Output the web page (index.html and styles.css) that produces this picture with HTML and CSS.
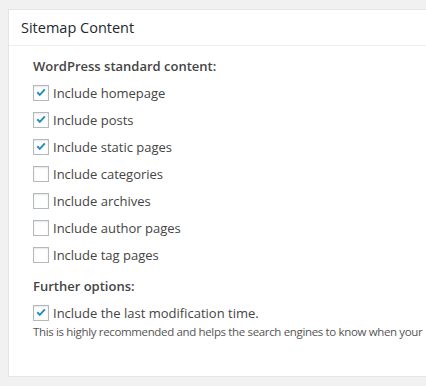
FILE: index.html
```html
<!DOCTYPE html>
<html>
<head>
  <meta charset="UTF-8" />
  <title>Sitemap Content</title>
  <link rel="stylesheet" href="styles.css">
</head>
<body>

  <div class="postbox">
    <h2 class="hndle">Sitemap Content</h2>
    <div class="inside">
      <h4>WordPress standard content:</h4>
      <ul class="opts">
        <li><span class="box"><svg viewBox="0 0 16 16"><path d="M3 7.9l1.6-1.5 2 2.2 5-5.4 1.6 1.5-6.6 7z"/></svg></span>Include homepage</li>
        <li><span class="box"><svg viewBox="0 0 16 16"><path d="M3 7.9l1.6-1.5 2 2.2 5-5.4 1.6 1.5-6.6 7z"/></svg></span>Include posts</li>
        <li><span class="box"><svg viewBox="0 0 16 16"><path d="M3 7.9l1.6-1.5 2 2.2 5-5.4 1.6 1.5-6.6 7z"/></svg></span>Include static pages</li>
        <li><span class="box"></span>Include categories</li>
        <li><span class="box"></span>Include archives</li>
        <li><span class="box"></span>Include author pages</li>
        <li><span class="box"></span>Include tag pages</li>
      </ul>

      <h4 class="further">Further options:</h4>
      <ul class="opts">
        <li><span class="box"><svg viewBox="0 0 16 16"><path d="M3 7.9l1.6-1.5 2 2.2 5-5.4 1.6 1.5-6.6 7z"/></svg></span>Include the last modification time.</li>
      </ul>
      <p class="desc">This is highly recommended and helps the search engines to know when your</p>
    </div>
  </div>

</body>
</html>
```

FILE: styles.css
```css
html, body {
  overflow: hidden;
}

body {
  margin: 0;
  padding: 9px 0 0 8px;
  background: #f1f1f1;
  font-family: "Open Sans", sans-serif;
  font-size: 13px;
  color: #444;
}

.postbox {
  width: 640px;
  background: #fff;
  border: 1px solid #e5e5e5;
  box-shadow: 0 1px 1px rgba(0, 0, 0, 0.04);
}

.hndle {
  margin: 0;
  padding: 8px 12px;
  font-size: 14.5px;
  font-weight: 400;
  line-height: 19px;
  color: #23282d;
  border-bottom: 1px solid #eee;
}

.inside {
  padding: 11px 24px 36px 24px;
}

.inside h4 {
  margin: 0 0 4px 0;
  font-size: 13px;
  font-weight: 600;
  line-height: 18px;
  color: #444;
}

.inside h4.further {
  margin-top: 9px;
}

.opts {
  list-style: none;
  margin: 0;
  padding: 0;
}

.opts li {
  display: flex;
  align-items: center;
  height: 27px;
  white-space: nowrap;
}

.box {
  box-sizing: border-box;
  width: 16px;
  height: 16px;
  margin-right: 4px;
  border: 1px solid #b4b9be;
  background: #fff;
  box-shadow: inset 0 1px 2px rgba(0, 0, 0, 0.1);
  display: flex;
}

.box svg {
  width: 14px;
  height: 14px;
  fill: #1e8cbe;
}

.desc {
  margin: -2px 0 0 0;
  font-size: 11.5px;
  letter-spacing: -0.35px;
  line-height: 16px;
  color: #555;
  white-space: nowrap;
}
```
